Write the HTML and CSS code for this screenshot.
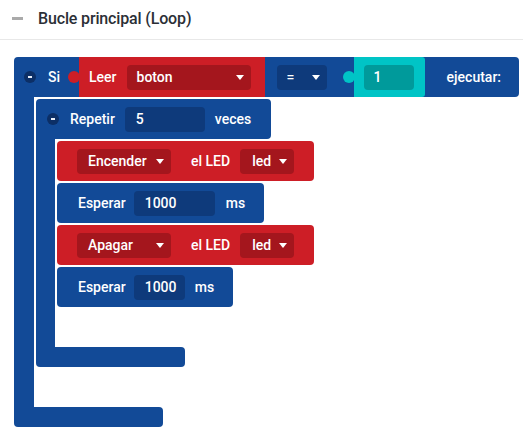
FILE: index.html
```html
<!DOCTYPE html>
<html>
<head>
<meta charset="utf-8">
<link rel="stylesheet" href="styles.css">
</head>
<body>
<div class="header">
  <span class="dash"></span>
  <span class="title">Bucle principal (Loop)</span>
</div>
<div class="workspace">
  <div class="cblock">
    <div class="head head-si">
      <span class="collapse"></span>
      <span class="label lbl-si">Si</span>
      <div class="seg seg-red">
        <span class="label">Leer</span>
        <span class="dd dd-red dd-boton">boton<i class="tri"></i></span>
      </div>
      <span class="dd dd-blue dd-eq">=<i class="tri"></i></span>
      <div class="seg seg-cyan">
        <span class="field field-teal">1</span>
      </div>
      <span class="label lbl-ejecutar">ejecutar:</span>
    </div>
    <div class="body">
      <div class="spine"></div>
      <div class="stack">
        <div class="cblock">
          <div class="head head-rep">
            <span class="collapse"></span>
            <span class="label lbl-rep">Repetir</span>
            <span class="field field-blue field-5">5</span>
            <span class="label lbl-veces">veces</span>
          </div>
          <div class="body">
            <div class="spine spine-rep"></div>
            <div class="stack">
              <div class="stmt stmt-red">
                <span class="dd dd-red dd-action">Encender<i class="tri"></i></span>
                <span class="label lbl-led">el LED</span>
                <span class="dd dd-red dd-led">led<i class="tri"></i></span>
              </div>
              <div class="stmt stmt-blue">
                <span class="label">Esperar</span>
                <span class="field field-blue field-wait">1000</span>
                <span class="label lbl-ms">ms</span>
              </div>
              <div class="stmt stmt-red">
                <span class="dd dd-red dd-action">Apagar<i class="tri"></i></span>
                <span class="label lbl-led">el LED</span>
                <span class="dd dd-red dd-led">led<i class="tri"></i></span>
              </div>
              <div class="stmt stmt-blue">
                <span class="label">Esperar</span>
                <span class="field field-blue field-wait-short">1000</span>
                <span class="label lbl-ms2">ms</span>
              </div>
            </div>
          </div>
          <div class="foot foot-rep"></div>
        </div>
      </div>
    </div>
    <div class="foot foot-si"></div>
  </div>
</div>
</body>
</html>
```
FILE: styles.css
```css
* { box-sizing: border-box; }

html, body {
  margin: 0;
  padding: 0;
  background: #ffffff;
}

body {
  font-family: Roboto, "Liberation Sans", Arial, sans-serif;
  width: 523px;
  height: 433px;
  overflow: hidden;
}

.header {
  height: 40px;
  display: flex;
  align-items: center;
  padding-left: 12px;
  padding-bottom: 3px;
  border-bottom: 1px solid #e8e8e8;
}

.dash {
  width: 11px;
  height: 3px;
  background: #aaaaaa;
}

.title {
  margin-left: 15px;
  font-size: 16px;
  font-weight: 500;
  color: #2b2f36;
  letter-spacing: -0.15px;
}

.workspace {
  padding: 17px 0 0 14px;
}

.cblock {
  display: flex;
  flex-direction: column;
  align-items: flex-start;
}

.head {
  height: 40px;
  display: flex;
  align-items: center;
  background: #124a97;
  border-radius: 4px 4px 4px 0;
}

.label {
  color: #ffffff;
  font-size: 14px;
  font-weight: 500;
  white-space: nowrap;
}

.collapse {
  width: 12px;
  height: 12px;
  border-radius: 50%;
  background: #0c2f66;
  display: flex;
  align-items: center;
  justify-content: center;
  flex: none;
}

.collapse::after {
  content: "";
  width: 4px;
  height: 1.5px;
  background: #e8eef8;
}

/* Si header */
.head-si {
  padding: 0 18px 0 10px;
}

.lbl-si { margin-left: 12px; }

.seg {
  position: relative;
  align-self: stretch;
  display: flex;
  align-items: center;
}

.seg::before {
  content: "";
  position: absolute;
  left: -11px;
  top: 14px;
  width: 12px;
  height: 12px;
  border-radius: 50%;
}

.seg-red {
  background: #cd1e26;
  margin-left: 19px;
  padding: 0 14px 0 10px;
}

.seg-red::before { background: #cd1e26; }

.seg-cyan {
  background: #00c4c6;
  margin-left: 27px;
  width: 71px;
  padding-left: 10px;
  border-radius: 0 3px 3px 0;
}

.seg-cyan::before { background: #00c4c6; }

.dd, .field {
  position: relative;
  height: 25px;
  display: flex;
  align-items: center;
  border-radius: 4px;
  color: #ffffff;
  font-size: 14px;
  font-weight: 500;
  padding-left: 10px;
  flex: none;
  overflow: hidden;
  white-space: nowrap;
}

.dd-red { background: #a4161d; }
.dd-blue { background: #0e3a7b; }
.field-blue { background: #0e3a7b; }
.field-teal { background: #009a9b; width: 50px; }

.tri {
  position: absolute;
  right: 7px;
  top: 10px;
  width: 0;
  height: 0;
  border-left: 4.5px solid transparent;
  border-right: 4.5px solid transparent;
  border-top: 5px solid #ffffff;
}

.dd-boton { width: 124px; margin-left: 10px; }
.dd-eq { width: 50px; margin-left: 12px; padding-left: 10px; }

.lbl-ejecutar { margin-left: 22px; }

/* body with spine */
.body {
  display: flex;
}

.spine {
  width: 20px;
  background: #124a97;
  flex: none;
}

.spine-rep { width: 19px; }

.stack {
  display: flex;
  flex-direction: column;
  align-items: flex-start;
  gap: 2px;
  padding: 2px 0 40px 2px;
}

.foot {
  height: 20px;
  background: #124a97;
  border-radius: 0 4px 4px 4px;
}

.foot-si { width: 149px; }
.foot-rep { width: 149px; }

/* Repetir header */
.head-rep {
  padding: 0 20px 0 11px;
}

.lbl-rep { margin-left: 11px; }
.field-5 { width: 80px; margin-left: 10px; padding-left: 11px; }
.lbl-veces { margin-left: 10px; }

/* statements */
.stmt {
  height: 40px;
  display: flex;
  align-items: center;
  border-radius: 4px;
}

.stmt-red {
  background: #cd1e26;
  padding: 0 20px;
}

.stmt-blue {
  background: #124a97;
  padding: 0 19px 0 21px;
}

.dd-action { width: 94px; padding-left: 11px; }
.lbl-led { margin-left: 20px; }
.dd-led { width: 54px; margin-left: 10px; padding-left: 12px; }

.field-wait { width: 81px; margin-left: 8px; padding-left: 11px; }
.field-wait-short { width: 51px; margin-left: 8px; padding-left: 11px; }
.lbl-ms { margin-left: 11px; }
.lbl-ms2 { margin-left: 10px; }
```
